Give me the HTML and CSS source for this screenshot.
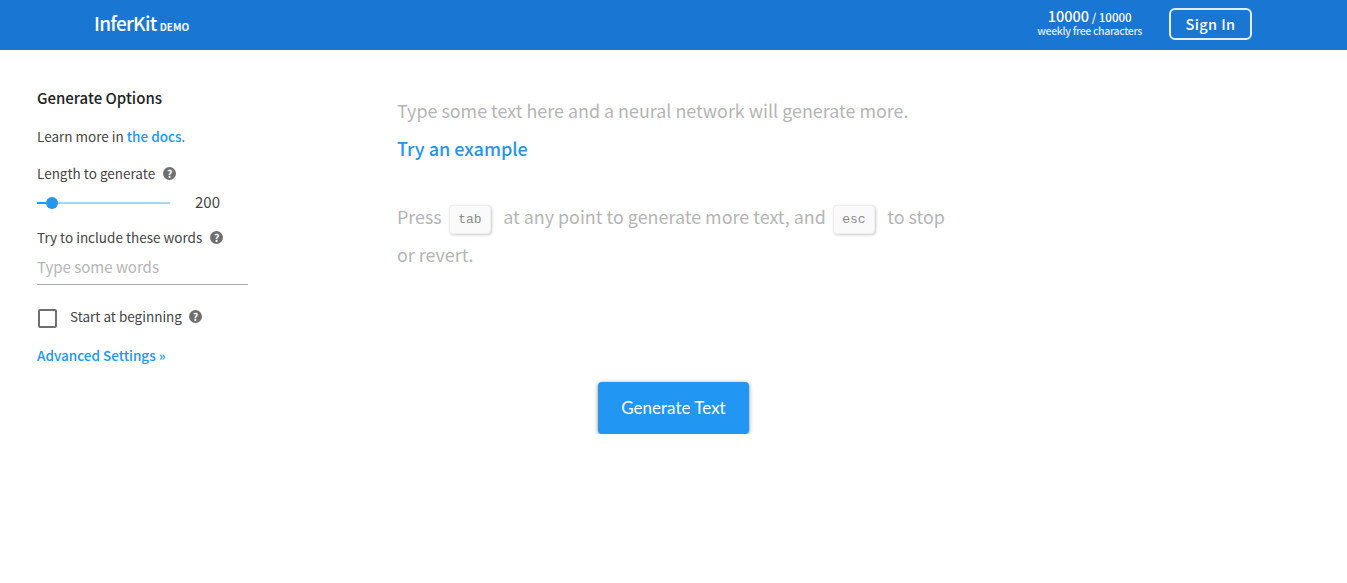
FILE: index.html
```html
<!DOCTYPE html>
<html lang="en">
<head>
    <meta charset="UTF-8">
    <title>InferKit Demo</title>
    <link rel="stylesheet" href="styles.css">
</head>
<body>
    <header class="topbar">
        <div class="logo"><span class="logo-name">InferKit</span> <span class="logo-demo">DEMO</span></div>
        <div class="topbar-right">
            <div class="quota">
                <div class="quota-count"><b>10000</b> <span class="quota-sep">/</span> <span class="quota-max">10000</span></div>
                <div class="quota-label">weekly free characters</div>
            </div>
            <button type="button" class="sign-in">Sign In</button>
        </div>
    </header>
    <main class="page">
        <aside class="options">
            <h2 class="options-title">Generate Options</h2>
            <p class="docs-line">Learn more in <a href="#" class="docs-link">the docs</a>.</p>
            <div class="label-row length-label">Length to generate <span class="help">?</span></div>
            <div class="slider-row">
                <div class="slider">
                    <span class="slider-fill"></span>
                    <span class="slider-thumb"></span>
                    <span class="slider-rest"></span>
                </div>
                <span class="slider-value">200</span>
            </div>
            <div class="label-row words-label">Try to include these words <span class="help">?</span></div>
            <input type="text" class="words-input" placeholder="Type some words">
            <div class="label-row start-row">
                <span class="checkbox"></span>
                <span class="start-text">Start at beginning</span>
                <span class="help">?</span>
            </div>
            <a href="#" class="advanced">Advanced Settings »</a>
        </aside>
        <section class="editor">
            <p class="hint">Type some text here and a neural network will generate more.</p>
            <a href="#" class="example">Try an example</a>
            <p class="hint keys">Press <kbd>tab</kbd> at any point to generate more text, and <kbd>esc</kbd> to stop or revert.</p>
        </section>
    </main>
    <div class="actions">
        <button type="button" class="generate">Generate Text</button>
    </div>
</body>
</html>
```

FILE: styles.css
```css
/* Noto Sans CJK carries the Source Sans latin letters the original uses */
body {
    font-family: "Noto Sans CJK JP", "Noto Sans", sans-serif;
    margin: 0;
    padding: 0;
    background: #fff;
    color: #444;
    font-size: 13.5px;
    line-height: 20px;
}
/* Top bar */
.topbar {
    display: flex;
    justify-content: space-between;
    align-items: center;
    height: 50px;
    padding: 0 95px 0 94px;
    background: #1976d2;
    color: #fff;
}
.logo {
    display: flex;
    align-items: baseline;
    gap: 3px;
}
.logo-name {
    font-size: 19px;
    font-weight: 500;
    letter-spacing: -0.7px;
}
.logo-demo {
    font-size: 10px;
    font-weight: 700;
}
.topbar-right {
    display: flex;
    align-items: center;
    gap: 27px;
    margin-bottom: 2px;
}
.quota {
    margin-bottom: 2px;
    text-align: center;
}
.quota-count {
    font-size: 11.5px;
    line-height: 14px;
    font-weight: 500;
}
.quota-count b {
    font-size: 14.5px;
    font-weight: 500;
}
.quota-label {
    font-size: 10.5px;
    line-height: 14px;
    font-weight: 500;
    letter-spacing: -0.35px;
    opacity: 0.85;
}
.sign-in {
    width: 83px;
    height: 32px;
    padding: 0 0 2px;
    border: 2px solid #e3eefa;
    border-radius: 6px;
    background: transparent;
    color: #fff;
    font-family: inherit;
    font-size: 14.5px;
    font-weight: 500;
    letter-spacing: 0.4px;
}
/* Two columns under the bar */
.page {
    display: flex;
}
.options {
    width: 211px;
    padding: 38px 0 0 37px;
    margin-right: 149px;
}
.options-title {
    margin: 0;
    font-size: 15px;
    line-height: 20px;
    font-weight: 500;
    color: #222;
}
.docs-line {
    margin: 18px 0 0;
}
.docs-link {
    color: #2196f3;
    font-weight: 500;
    text-decoration: none;
}
.label-row {
    display: flex;
    align-items: center;
    gap: 8px;
}
.length-label {
    margin-top: 17px;
}
.help {
    display: flex;
    justify-content: center;
    align-items: center;
    width: 13px;
    height: 13px;
    margin-top: 1px;
    border-radius: 50%;
    background: #6f6f6f;
    color: #fff;
    font-size: 10.5px;
    line-height: 13px;
    font-weight: 700;
}
/* Slider */
.slider-row {
    display: flex;
    align-items: center;
    margin-top: 9px;
    height: 20px;
}
.slider {
    display: flex;
    align-items: center;
    width: 133px;
    margin-top: 1px;
}
.slider-fill {
    width: 9px;
    height: 2px;
    background: #2196f3;
}
.slider-thumb {
    width: 12px;
    height: 12px;
    border-radius: 50%;
    background: #2196f3;
}
.slider-rest {
    flex: 1;
    height: 2px;
    background: #a6d5fa;
}
.slider-value {
    margin-left: 25px;
    font-size: 15px;
}
.words-label {
    margin-top: 15px;
}
.words-input {
    display: block;
    box-sizing: border-box;
    width: 100%;
    height: 37px;
    margin-top: 1px;
    padding: 0;
    border: none;
    border-bottom: 1px solid #aaa;
    outline: none;
    font-family: inherit;
    font-size: 15px;
    color: #444;
}
.words-input::placeholder {
    color: #b5b5b5;
}
.start-row {
    margin-top: 21px;
    gap: 0;
}
.checkbox {
    box-sizing: border-box;
    width: 19px;
    height: 19px;
    margin: 1px 13px 0 1px;
    border: 2px solid #6f6f6f;
    border-radius: 2px;
}
.start-text {
    margin: 0 7px 4px 0;
}
.start-row .help {
    margin: 0 0 3px;
}
.advanced {
    display: block;
    margin-top: 15px;
    color: #2196f3;
    font-weight: 500;
    text-decoration: none;
}
/* Editor placeholder text */
.editor {
    width: 556px;
    padding-top: 41px;
}
.hint {
    margin: 0;
    font-size: 17.9px;
    line-height: 38px;
    color: #b5b5b5;
}
.example {
    display: block;
    margin-top: 0;
    font-size: 18px;
    line-height: 38px;
    font-weight: 500;
    color: #2196f3;
    text-decoration: none;
}
.keys {
    margin-top: 30px;
}
kbd {
    display: inline-block;
    box-sizing: border-box;
    height: 29px;
    margin: 0 8px 0 3px;
    padding: 0 8.5px;
    border: 1px solid #eee;
    border-radius: 4px;
    background: #fafafa;
    box-shadow: 1px 1px 3px rgba(0, 0, 0, 0.2);
    font-family: "Liberation Mono", monospace;
    font-size: 13px;
    line-height: 27px;
    color: #8a8a8a;
    vertical-align: 1px;
}
/* Generate button */
.actions {
    display: flex;
    justify-content: center;
    margin-top: 17px;
}
.generate {
    width: 151px;
    height: 52px;
    padding: 0 0 2px;
    border: none;
    border-radius: 4px;
    background: #2196f3;
    box-shadow: 0 1px 4px rgba(0, 0, 0, 0.45);
    color: #fff;
    font-family: Lato, sans-serif;
    font-size: 17px;
}
```
